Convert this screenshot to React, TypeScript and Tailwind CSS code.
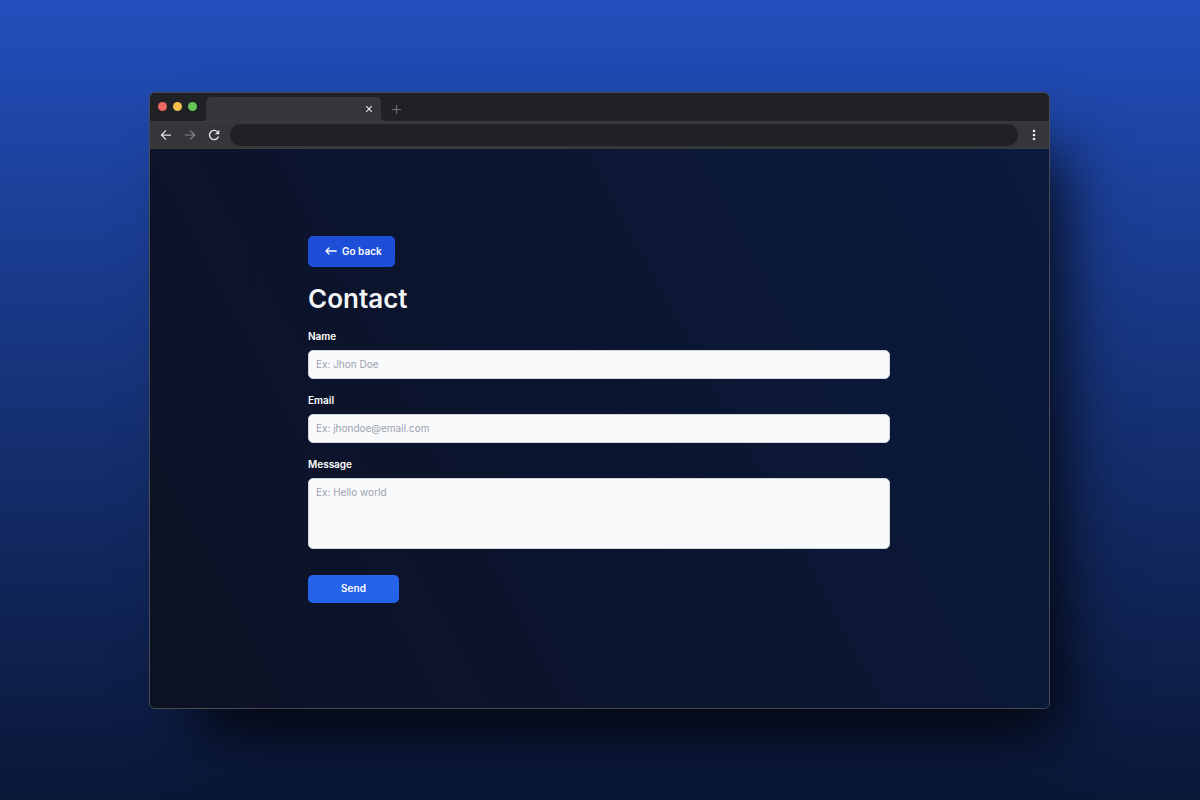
import type { ReactNode } from "react";

function TabStrip() {
  return (
    <div className="flex h-7 items-end bg-[#202124]">
      <div className="flex w-14 gap-[6px] self-stretch pt-[9px] pl-2">
        <span className="size-[9px] rounded-full bg-[#ed6a5e]" />
        <span className="size-[9px] rounded-full bg-[#f5bf4f]" />
        <span className="size-[9px] rounded-full bg-[#62c554]" />
      </div>
      <div className="relative flex h-6 w-[175px] items-center justify-end rounded-t-[5px] bg-[#35363a] pr-2">
        <svg className="absolute bottom-0 -left-1 size-1" viewBox="0 0 4 4" aria-hidden="true">
          <path d="M4 0V4H0A4 4 0 0 0 4 0Z" fill="#35363a" />
        </svg>
        <svg className="absolute -right-1 bottom-0 size-1" viewBox="0 0 4 4" aria-hidden="true">
          <path d="M0 0V4H4A4 4 0 0 1 0 0Z" fill="#35363a" />
        </svg>
        <button type="button" aria-label="Close tab">
          <svg className="block size-2" viewBox="0 0 8 8" fill="none" stroke="#e4e5e6" strokeWidth="1.2" aria-hidden="true">
            <path d="M1.2 1.2L6.8 6.8M6.8 1.2L1.2 6.8" />
          </svg>
        </button>
      </div>
      <button type="button" aria-label="New tab" className="mb-[7px] ml-[11px]">
        <svg className="block size-[9px]" viewBox="0 0 9 9" fill="none" stroke="#6d6e71" strokeWidth="1.2" aria-hidden="true">
          <path d="M4.5 0V9M0 4.5H9" />
        </svg>
      </button>
    </div>
  );
}

function Toolbar() {
  return (
    <div className="flex h-7 items-center border-y border-[#3b3c40] bg-[#35363a] pr-[13px] pl-[10px]">
      <div className="flex w-[70px] gap-3">
        <button type="button" aria-label="Back">
          <svg className="block size-3" viewBox="0 0 12 12" fill="none" stroke="#dedfe0" strokeWidth="1.25" aria-hidden="true">
            <path d="M11 6H1.6M6 1.4L1.4 6L6 10.6" />
          </svg>
        </button>
        <button type="button" aria-label="Forward">
          <svg className="block size-3" viewBox="0 0 12 12" fill="none" stroke="#848589" strokeWidth="1.2" aria-hidden="true">
            <path d="M1 6H10.4M6 1.4L10.6 6L6 10.6" />
          </svg>
        </button>
        <button type="button" aria-label="Reload">
          <svg className="block size-3" viewBox="0 0 12 12" fill="none" aria-hidden="true">
            <path d="M10.5 7.4A4.6 4.6 0 1 1 9.5 2.9" stroke="#dedfe0" strokeWidth="1.4" />
            <path d="M11.3 0.7V5.2H6.8Z" fill="#dedfe0" />
          </svg>
        </button>
      </div>
      <input aria-label="Address" className="h-[22px] min-w-0 flex-1 rounded-full bg-[#202124] px-3 text-[10px] text-white outline-none" />
      <button type="button" aria-label="Menu" className="ml-[14px]">
        <svg className="block h-3 w-1" viewBox="0 0 4 12" fill="#eeeeef" aria-hidden="true">
          <circle cx="2" cy="2" r="1.3" />
          <circle cx="2" cy="6" r="1.3" />
          <circle cx="2" cy="10" r="1.3" />
        </svg>
      </button>
    </div>
  );
}

function Field({ id, label, children }: { id: string; label: string; children: ReactNode }) {
  return (
    <div className="flex flex-col gap-[6px]">
      <label htmlFor={id} className="text-[10px] leading-[15px] font-semibold text-white">
        {label}
      </label>
      {children}
    </div>
  );
}

const control =
  "w-full rounded-[5px] border border-[#d1d5db] bg-[#f9fafb] px-[7px] text-[10px] leading-[15px] text-gray-900 outline-none placeholder:text-[#9ca3af]";

function ContactForm() {
  return (
    <form className="flex flex-col gap-[14px]" onSubmit={(e) => e.preventDefault()}>
      <Field id="name" label="Name">
        <input id="name" type="text" placeholder="Ex: Jhon Doe" className={`${control} h-[29px]`} />
      </Field>
      <Field id="email" label="Email">
        <input id="email" type="email" placeholder="Ex: jhondoe@email.com" className={`${control} h-[29px]`} />
      </Field>
      <Field id="message" label="Message">
        <textarea id="message" placeholder="Ex: Hello world" className={`${control} block h-[71px] resize-none py-[6px]`} />
      </Field>
      <button type="submit" className="mt-3 h-7 w-[91px] rounded-[5px] bg-[#2563eb] text-[10px] font-semibold text-white">
        Send
      </button>
    </form>
  );
}

export default function App() {
  return (
    <div className="flex min-h-screen items-center justify-center overflow-hidden bg-linear-to-b from-[#224fbd] to-[#0a1737] pr-px font-['Inter','Liberation_Sans',sans-serif]">
      <div className="w-[calc(75vw+1px)] overflow-hidden rounded-md border border-[#4a4b50] shadow-[30px_42px_60px_-18px_rgba(0,0,0,0.85)]">
        <TabStrip />
        <Toolbar />
        <main className="bg-linear-[62deg] from-[#0d1124] to-[#0a1a3d] pt-[87px] pr-[25px] pb-[105px] pl-6">
          <div className="mx-auto max-w-[582px]">
            <a
              href="#home"
              className="inline-flex h-[31px] items-center gap-[5px] rounded-[5px] bg-[#1d4ed8] pr-[13px] pl-[17px] align-top text-[10px] font-semibold text-white"
            >
              <svg className="size-3" viewBox="0 0 12 12" fill="none" stroke="currentColor" strokeWidth="1.4" strokeLinecap="round" strokeLinejoin="round" aria-hidden="true">
                <path d="M11.2 6H1M4 3L1 6L4 9" />
              </svg>
              Go back
            </a>
            <h1 className="mt-4 mb-[14px] text-[26px] leading-8 font-semibold text-[#f3f4f6]">Contact</h1>
            <ContactForm />
          </div>
        </main>
      </div>
    </div>
  );
}
